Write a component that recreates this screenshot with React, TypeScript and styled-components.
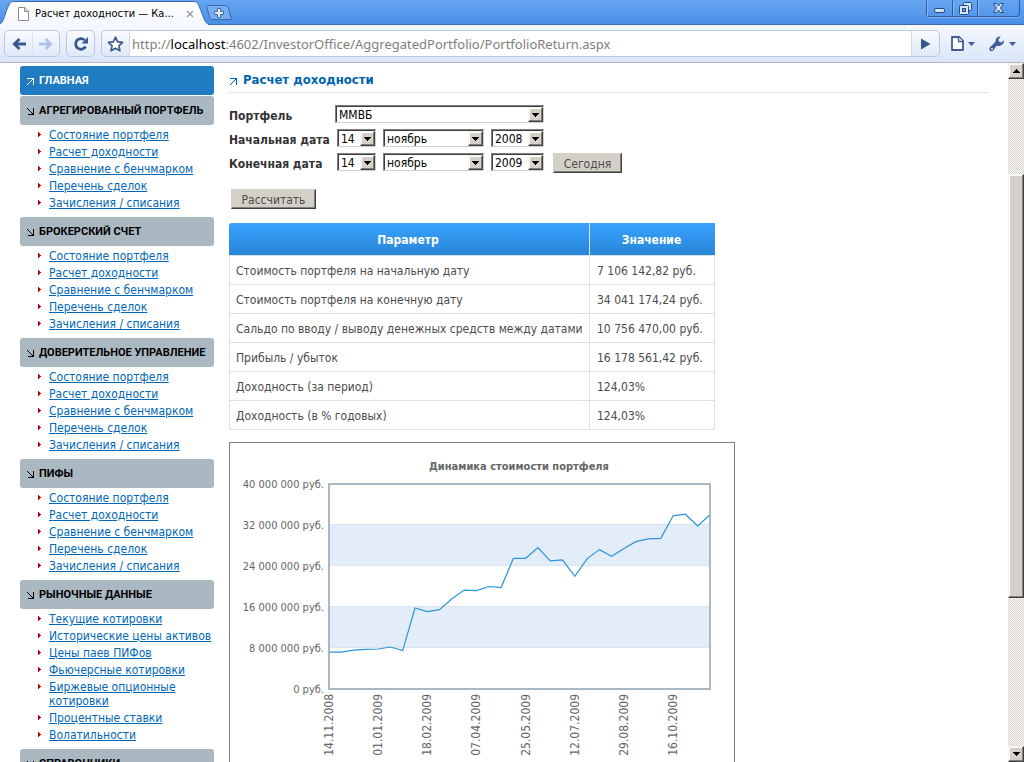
import React from "react";
import styled, { createGlobalStyle, css } from "styled-components";

const SANS = `"DejaVu Sans Condensed", "DejaVu Sans", sans-serif`;

const GlobalStyle = createGlobalStyle`
  *, *::before, *::after { box-sizing: border-box; }
  body { margin: 0; background: #fff; font: 12px/14px ${SANS}; color: #4c4c4c; }
  button, select, input { font: inherit; margin: 0; }
`;

const Window = styled.div`
  display: flex;
  flex-direction: column;
  height: 100vh;
  overflow: hidden;
`;

/* ---------- browser chrome ---------- */

const TabStrip = styled.header`
  display: flex;
  align-items: flex-start;
  flex: none;
  height: 25px;
  background: linear-gradient(#66a6f1, #4a8fe7);
  border-bottom: 1px solid #3d69a9;
`;

const Tab = styled.div`
  position: relative;
  display: flex;
  align-items: center;
  width: 209px;
  height: 25px;
  padding: 2px 15px 0 17px;
  gap: 5px;
  color: #000;
  font-size: 11px;
`;

const TabShape = styled.svg`
  position: absolute;
  inset: 0;
  z-index: 0;
`;

const TabIcon = styled.svg`
  position: relative;
  flex: none;
`;

const TabTitle = styled.span`
  position: relative;
  flex: 1;
  white-space: nowrap;
`;

const BareButton = styled.button`
  display: flex;
  align-items: center;
  justify-content: center;
  padding: 0;
  border: 0;
  background: none;
  position: relative;
`;

const NewTab = styled(BareButton)`
  margin: 5px auto 0 -4px;
`;

const WindowControls = styled.div`
  display: flex;
  height: 17px;
  margin-right: 4px;
  border: 1px solid #2c5ca0;
  border-top: 0;
  border-radius: 0 0 4px 4px;
  box-shadow: 0 1px 0 #7db3f3;
`;

const WindowButton = styled(BareButton)<{ $wide?: boolean }>`
  width: ${(p) => (p.$wide ? 42 : 25)}px;
  box-shadow: inset 1px 0 0 #83b6f4;
  & + & { border-left: 1px solid #2c5ca0; }
`;

const Toolbar = styled.nav`
  display: flex;
  align-items: center;
  flex: none;
  gap: 6px;
  height: 38px;
  padding: 0 8px 0 4px;
  background: linear-gradient(#f5f8fe, #d9e6f7);
  border-bottom: 1px solid #b1b6c6;
`;

const ToolGroup = styled.div`
  display: flex;
  height: 27px;
  border: 1px solid #bcc6e2;
  border-radius: 5px;
  background: linear-gradient(#fafcff, #dfe9f8);
  overflow: hidden;
`;

const ToolButton = styled(BareButton)`
  width: 27px;
  & + & { border-left: 1px solid #dbe3f2; }
`;

const Omnibox = styled.form`
  display: flex;
  flex: 1;
  height: 27px;
  border: 1px solid #bcc6e2;
  border-radius: 5px;
  background: linear-gradient(#fafcff, #dfe9f8);
  overflow: hidden;
`;

const Address = styled.label`
  position: relative;
  display: flex;
  flex: 1;
  align-items: center;
  background: #fff;
  border: solid #d0d8ea;
  border-width: 0 1px;
  font-family: "Noto Sans", sans-serif;
  font-size: 13px;
  line-height: 18px;
`;

const AddressInput = styled.input`
  width: 100%;
  height: 100%;
  padding: 0 2px;
  border: 0;
  outline: 0;
  background: none;
  color: transparent;
  caret-color: #000;
`;

const AddressText = styled.span`
  position: absolute;
  left: 2px;
  white-space: pre;
  color: #808080;
  pointer-events: none;
  b { font-weight: 400; color: #000; }
`;

const MenuButton = styled(BareButton)`
  gap: 4px;
  margin-left: 5px;
  & + & { margin-left: 8px; }
`;

/* ---------- page ---------- */

const Viewport = styled.div`
  display: flex;
  flex: 1;
  min-height: 0;
`;

const Page = styled.div`
  display: flex;
  flex: 1;
  align-items: flex-start;
  gap: 15px;
  padding: 3px 20px 0;
  overflow: hidden;
`;

const Sidebar = styled.aside`
  flex: none;
  width: 194px;
`;

const SectionTitle = styled.h2<{ $active?: boolean }>`
  display: flex;
  align-items: center;
  gap: 4px;
  height: 29px;
  margin: 0;
  padding: 0 6px;
  border-radius: 3px;
  background: ${(p) => (p.$active ? "#207cc1" : "#aab8c2")};
  color: ${(p) => (p.$active ? "#fff" : "#000")};
  font: bold 11px/14px Roboto, sans-serif;
  white-space: nowrap;
  ${(p) => p.$active && css`margin-bottom: 1px;`}
  a { color: inherit; text-decoration: none; }
`;

const LinkList = styled.ul`
  margin: 0;
  padding: 3px 0 4px 18px;
  list-style: none;
`;

const LinkItem = styled.li`
  display: flex;
  gap: 7px;
  padding-bottom: 3px;
  svg { flex: none; margin-top: 4px; }
  a { color: #0067b8; text-underline-offset: 1px; }
`;

const Main = styled.main`
  flex: 1;
  min-width: 0;
`;

const PageTitle = styled.h1`
  display: flex;
  align-items: center;
  gap: 5px;
  height: 27px;
  margin: 0 0 11px;
  padding-top: 2px;
  border-bottom: 1px solid #dbe1e7;
  color: #0062ac;
  font-size: 13px;
  line-height: 18px;
`;

const Form = styled.form`
  display: flex;
  flex-direction: column;
  align-items: flex-start;
`;

const Row = styled.div`
  display: flex;
  align-items: center;
  height: 24px;
  padding-bottom: 4px;
`;

const Label = styled.label`
  width: 106px;
  padding-top: 3px;
  color: #333;
  font-weight: bold;
  white-space: nowrap;
`;

const DateFields = styled.div`
  display: flex;
  align-items: center;
  gap: 7px;
  margin-left: 2px;
`;

const SelectBox = styled.span<{ $width: number }>`
  position: relative;
  display: block;
  width: ${(p) => p.$width}px;
  height: 18px;
`;

const Select = styled.select`
  display: block;
  width: 100%;
  height: 100%;
  padding: 1px 16px 0 3px;
  appearance: none;
  border: 1px solid;
  border-color: #808080 #d4d0c8 #d4d0c8 #808080;
  border-radius: 0;
  box-shadow: inset 1px 1px 0 #404040;
  background: #fff;
  color: #000;
  line-height: 14px;
`;

const bevel = css`
  border: 1px solid;
  border-color: #f4f2ee #404040 #404040 #f4f2ee;
  box-shadow: inset -1px -1px 0 #808080, inset 1px 1px 0 #fff;
  background: #d4d0c8;
`;

const SelectArrow = styled.span`
  position: absolute;
  top: 2px;
  right: 1px;
  bottom: 1px;
  width: 15px;
  display: flex;
  align-items: center;
  justify-content: center;
  pointer-events: none;
  ${bevel}
`;

const PushButton = styled.button<{ $width: number }>`
  width: ${(p) => p.$width}px;
  height: 20px;
  padding: 1px 0 0;
  border: 1px solid;
  border-color: #d4d0c8 #404040 #404040 #d4d0c8;
  box-shadow: inset -1px -1px 0 #808080;
  border-radius: 0;
  background: #d4d0c8;
  color: #4c4c4c;
  line-height: 16px;
`;

const Actions = styled.div`
  padding: 13px 2px 14px;
`;

const DataTable = styled.table`
  width: 486px;
  table-layout: fixed;
  border-collapse: separate;
  border-spacing: 0;
  thead { background: linear-gradient(#3aa1ff, #2787d6); }
`;

const HeadCell = styled.th`
  height: 32px;
  padding: 2px 2px 0 0;
  color: #fff;
  &:first-child { width: 361px; border-right: 1px solid #dbe8f4; border-top-left-radius: 3px; }
`;

const Cell = styled.td`
  height: 29px;
  padding: 2px 6px 0 7px;
  border: solid #dbe1e7;
  border-width: 0 1px 1px 0;
  white-space: nowrap;
  &:first-child { border-left-width: 1px; padding-left: 6px; }
  tr:first-child > & { border-top-width: 1px; height: 30px; }
`;

const ChartFrame = styled.figure`
  max-width: 506px;
  margin: 12px 0 0;
  border: 1px solid #7f7f7f;
  svg { display: block; }
`;

/* ---------- scroll bar ---------- */

const ScrollBar = styled.div`
  display: flex;
  flex-direction: column;
  flex: none;
  width: 16px;
  background: repeating-conic-gradient(#d4d0c8 0 25%, #fff 0 50%) 0 0 / 2px 2px;
`;

const ScrollButton = styled(BareButton)`
  height: 16px;
  ${bevel}
`;

const Track = styled.div`
  flex: 1;
  display: flex;
  flex-direction: column;
`;

const TrackGap = styled.div<{ $grow: number }>`
  flex: ${(p) => p.$grow} 0 0;
`;

const Thumb = styled.div`
  flex: 424 0 0;
  ${bevel}
`;

/* ---------- drawings ---------- */

const ArrowMark = ({ down }: { down?: boolean }) => (
  <svg width="9" height="11" viewBox="0 0 9 11" fill="none" stroke="currentColor" shapeRendering="crispEdges">
    {down ? (
      <path d="M7.500 3v7M2 9.500h6M1 3l6 6" />
    ) : (
      <path d="M1 3.500h7M7.500 3v7M1 10l6-6" />
    )}
  </svg>
);

const Bullet = () => (
  <svg width="4" height="5" viewBox="0 0 4 5" fill="#c8000a" shapeRendering="crispEdges">
    <path d="M0 0h1v1h1v1h1v1h-1v1h-1v1h-1z" />
  </svg>
);

const Triangle = ({ up }: { up?: boolean }) => (
  <svg width="7" height="4" viewBox="0 0 7 4" fill="#000" shapeRendering="crispEdges">
    <path d={up ? "M3 0h1v1h1v1h1v1h1v1H0v-1h1v-1h1v-1h1z" : "M0 0h7v1h-1v1h-1v1h-1v1h-1v-1h-1v-1h-1v-1h-1z"} />
  </svg>
);

const MenuCaret = () => (
  <svg width="7" height="4" viewBox="0 0 7 4" fill="#3d5c98"><path d="M0 0h7L3.500 4z" /></svg>
);

/* ---------- data ---------- */

const portfolioLinks = [
  "Состояние портфеля",
  "Расчет доходности",
  "Сравнение с бенчмарком",
  "Перечень сделок",
  "Зачисления / списания",
];

const sections: { title: string; links: string[] }[] = [
  { title: "АГРЕГИРОВАННЫЙ ПОРТФЕЛЬ", links: portfolioLinks },
  { title: "БРОКЕРСКИЙ СЧЕТ", links: portfolioLinks },
  { title: "ДОВЕРИТЕЛЬНОЕ УПРАВЛЕНИЕ", links: portfolioLinks },
  { title: "ПИФЫ", links: portfolioLinks },
  {
    title: "РЫНОЧНЫЕ ДАННЫЕ",
    links: [
      "Текущие котировки",
      "Исторические цены активов",
      "Цены паев ПИФов",
      "Фьючерсные котировки",
      "Биржевые опционные котировки",
      "Процентные ставки",
      "Волатильности",
    ],
  },
  { title: "СПРАВОЧНИКИ", links: [] },
];

const results: [string, string][] = [
  ["Стоимость портфеля на начальную дату", "7 106 142,82 руб."],
  ["Стоимость портфеля на конечную дату", "34 041 174,24 руб."],
  ["Сальдо по вводу / выводу денежных средств между датами", "10 756 470,00 руб."],
  ["Прибыль / убыток", "16 178 561,42 руб."],
  ["Доходность (за период)", "124,03%"],
  ["Доходность (в % годовых)", "124,03%"],
];

/* Portfolio value in millions of roubles, one point every twelve days */
const values = [
  7.2, 7.2, 7.6, 7.75, 7.8, 8.2, 7.5, 15.8, 15.1, 15.5, 17.6, 19.3, 19.2, 20, 19.8, 25.5,
  25.5, 27.6, 25, 25.2, 22, 25.4, 27.2, 25.9, 27.4, 28.8, 29.3, 29.4, 33.8, 34.1, 31.8, 34,
];
const axisValues = ["40 000 000", "32 000 000", "24 000 000", "16 000 000", "8 000 000", "0"];
const axisDates = [
  "14.11.2008", "01.01.2009", "18.02.2009", "07.04.2009",
  "25.05.2009", "12.07.2009", "29.08.2009", "16.10.2009",
];

const PLOT = { x: 99, y: 41, width: 381, height: 205 };

const ValueChart = () => {
  const stepX = PLOT.width / (values.length - 1);
  const points = values
    .map((v, i) => `${(PLOT.x + i * stepX).toFixed(1)},${(PLOT.y + PLOT.height * (1 - v / 40)).toFixed(1)}`)
    .join(" ");
  const bandY = (n: number) => PLOT.y + Math.round((PLOT.height * n) / 5);
  return (
    <svg width="504" height="340" viewBox="0 0 504 340" fontFamily={SANS} fontSize="11" fill="#666">
      <text x="289" y="27" textAnchor="middle" fontWeight="bold">Динамика стоимости портфеля</text>
      {[1, 3].map((n) => (
        <g key={n}>
          <rect x={PLOT.x} y={bandY(n)} width={PLOT.width} height={bandY(n + 1) - bandY(n)} fill="#e3edf9" />
          <path d={`M${PLOT.x} ${bandY(n) - 0.5}h${PLOT.width}M${PLOT.x} ${bandY(n + 1) - 0.5}h${PLOT.width}`} stroke="#dbe3ec" />
        </g>
      ))}
      <polyline points={points} fill="none" stroke="#2b93d9" strokeWidth="1.2" />
      <rect {...PLOT} fill="none" stroke="#a9b8c2" strokeWidth="2" />
      {axisValues.map((v, n) => (
        <text key={v} x="94" y={bandY(n) + 4} textAnchor="end">{v} руб.</text>
      ))}
      {axisDates.map((d, n) => (
        <text
          key={d}
          fontSize="12"
          textAnchor="end"
          transform={`translate(${Math.round(PLOT.x + n * 4 * stepX) + 4} 251) rotate(-90)`}
        >
          {d}
        </text>
      ))}
    </svg>
  );
};

const Dropdown = ({ id, label, width, value }: { id?: string; label?: string; width: number; value: string }) => (
  <SelectBox $width={width}>
    <Select id={id} aria-label={label} defaultValue={value}>
      <option>{value}</option>
    </Select>
    <SelectArrow><Triangle /></SelectArrow>
  </SelectBox>
);

const DateRow = ({ id, label, year, children }: { id: string; label: string; year: string; children?: React.ReactNode }) => (
  <Row>
    <Label htmlFor={id}>{label}</Label>
    <DateFields>
      <Dropdown id={id} width={39} value="14" />
      <Dropdown label={`${label}: месяц`} width={101} value="ноябрь" />
      <Dropdown label={`${label}: год`} width={53} value={year} />
      {children}
    </DateFields>
  </Row>
);

const TodayButton = styled(PushButton)`
  margin: 2px 0 0 2px;
`;

const URL_TEXT = "http://localhost:4602/InvestorOffice/AggregatedPortfolio/PortfolioReturn.aspx";

export default function App() {
  return (
    <>
      <GlobalStyle />
      <Window>
        <TabStrip>
          <Tab>
            <TabShape width="209" height="25" viewBox="0 0 209 25">
              <defs>
                <linearGradient id="tab" x1="0" y1="0" x2="0" y2="1">
                  <stop offset="0" stopColor="#fff" />
                  <stop offset="1" stopColor="#f5f8fe" />
                </linearGradient>
              </defs>
              <path d="M0 25V24C3 22 4 18 6 12C9 4 10 1.500 14 1.500H193C197 1.500 198 3 201 11C204 19 205 23 209 24.500V25Z" fill="url(#tab)" />
              <path d="M0 24C3 22 4 18 6 12C9 4 10 1.500 14 1.500H193C197 1.500 198 3 201 11C204 19 205 23 209 24.500" fill="none" stroke="#3d69a9" />
            </TabShape>
            <TabIcon width="13" height="14" viewBox="0 0 13 14" fill="#fff" stroke="#8b8b8b">
              <path d="M1.500 .5H8L11.500 4V13.500H1.500Z" />
              <path d="M7.500 .5V4.500H11.500" fill="#ddd" />
            </TabIcon>
            <TabTitle>Расчет доходности — Ка...</TabTitle>
            <BareButton type="button" aria-label="Закрыть вкладку">
              <svg width="8" height="8" viewBox="0 0 8 8" stroke="#a5a5a5" strokeWidth="1.600"><path d="M1 1l6 6M7 1l-6 6" /></svg>
            </BareButton>
          </Tab>
          <NewTab type="button" aria-label="Новая вкладка">
            <svg width="27" height="15" viewBox="0 0 27 15">
              <path d="M4 .5H20C22 .5 23 1.500 24 5L26.500 14.500H8C6 14.500 5 13.500 4 10L2 3C1.500 1 2 .5 4 .5Z" fill="#77aef2" stroke="#3d69a9" />
              <path d="M12.500 3.500h3v3h3v3h-3v3h-3v-3h-3v-3h3z" fill="#e4effc" stroke="#3d69a9" />
            </svg>
          </NewTab>
          <WindowControls>
            <WindowButton type="button" aria-label="Свернуть">
              <svg width="13" height="13" viewBox="0 0 13 13"><rect x="1.500" y="6.500" width="10" height="4" rx="1.500" fill="#d5e5fa" stroke="#254b83" /></svg>
            </WindowButton>
            <WindowButton type="button" aria-label="Восстановить">
              <svg width="13" height="13" viewBox="0 0 13 13" fill="#d5e5fa" stroke="#254b83">
                <rect x="4.500" y=".5" width="8" height="8" rx="1" />
                <rect x=".5" y="3.500" width="9" height="9" rx="1" />
                <rect x="3.500" y="6.500" width="3" height="3" fill="#5f9fee" />
              </svg>
            </WindowButton>
            <WindowButton $wide type="button" aria-label="Закрыть">
              <svg width="13" height="12" viewBox="0 0 13 12" fill="#d5e5fa" stroke="#254b83" strokeLinejoin="round">
                <path d="M1.500 1.500h3l2 2.500 2-2.500h3L8.500 6l3 4.500h-3l-2-2.500-2 2.500h-3L4.500 6z" />
              </svg>
            </WindowButton>
          </WindowControls>
        </TabStrip>

        <Toolbar>
          <ToolGroup>
            <ToolButton type="button" aria-label="Назад">
              <svg width="14" height="12" viewBox="0 0 14 12" fill="none" stroke="#39578f" strokeWidth="2.800"><path d="M14 6H2.500M7.500 1L2.300 6l5.200 5" /></svg>
            </ToolButton>
            <ToolButton type="button" aria-label="Вперед">
              <svg width="14" height="12" viewBox="0 0 14 12" fill="none" stroke="#aec3e3" strokeWidth="2.800"><path d="M0 6H11.500M6.500 1l5.200 5-5.200 5" /></svg>
            </ToolButton>
          </ToolGroup>
          <ToolGroup>
            <ToolButton type="button" aria-label="Обновить">
              <svg width="16" height="16" viewBox="0 0 16 16" fill="none" stroke="#39578f" strokeWidth="2.800">
                <path d="M12.600 10.500A5.300 5.300 0 1 1 11.500 4" />
                <path d="M15 1v6.500H8.500z" fill="#39578f" stroke="none" />
              </svg>
            </ToolButton>
          </ToolGroup>
          <Omnibox>
            <ToolButton type="button" aria-label="Добавить в закладки">
              <svg width="17" height="16" viewBox="0 0 17 16" fill="#fff" stroke="#39578f" strokeWidth="1.600" strokeLinejoin="round">
                <path d="M8.500 1.200l2.100 4.700 5 .5-3.700 3.400 1.100 5-4.500-2.600L4 14.800l1.100-5L1.400 6.400l5-.5z" />
              </svg>
            </ToolButton>
            <Address>
              <AddressInput aria-label="Адрес" defaultValue={URL_TEXT} />
              <AddressText aria-hidden="true">
                http://<b>localhost</b>:4602/InvestorOffice/AggregatedPortfolio/PortfolioReturn.aspx
              </AddressText>
            </Address>
            <ToolButton type="submit" aria-label="Перейти">
              <svg width="11" height="12" viewBox="0 0 11 12" fill="#39578f"><path d="M1 .5L10.500 6 1 11.500z" /></svg>
            </ToolButton>
          </Omnibox>
          <MenuButton type="button" aria-label="Меню страницы">
            <svg width="13" height="15" viewBox="0 0 13 15" fill="#fff" stroke="#3d5c98" strokeWidth="1.800" strokeLinejoin="round">
              <path d="M1 1h7l4 4v9H1z" />
              <path d="M7.500 1v4.500H12" strokeWidth="1.400" />
            </svg>
            <MenuCaret />
          </MenuButton>
          <MenuButton type="button" aria-label="Настройки">
            <svg width="16" height="16" viewBox="0 0 16 16" fill="#3d5c98">
              <path d="M11.800.6C9 0 6.200 2.300 6.500 5.800L.8 11.400c-1.600 2.100.9 4.900 3.300 3.300L7.500 9.800C11.500 10.700 15.300 8.200 15 4.300L12.300 6.600 10 5.800 9.400 3.500Z" />
              <circle cx="3" cy="13" r="1" fill="#dfe9f8" />
            </svg>
            <MenuCaret />
          </MenuButton>
        </Toolbar>

        <Viewport>
          <Page>
            <Sidebar>
              <SectionTitle $active><ArrowMark /><a href="#home">ГЛАВНАЯ</a></SectionTitle>
              {sections.map((s) => (
                <section key={s.title}>
                  <SectionTitle><ArrowMark down />{s.title}</SectionTitle>
                  <LinkList>
                    {s.links.map((l) => (
                      <LinkItem key={l}><Bullet /><a href="#open">{l}</a></LinkItem>
                    ))}
                  </LinkList>
                </section>
              ))}
            </Sidebar>
            <Main>
              <PageTitle><ArrowMark />Расчет доходности</PageTitle>
              <Form>
                <Row>
                  <Label htmlFor="portfolio">Портфель</Label>
                  <Dropdown id="portfolio" width={209} value="ММВБ" />
                </Row>
                <DateRow id="start" label="Начальная дата" year="2008" />
                <DateRow id="end" label="Конечная дата" year="2009">
                  <TodayButton type="button" $width={69}>Сегодня</TodayButton>
                </DateRow>
                <Actions><PushButton type="button" $width={85}>Рассчитать</PushButton></Actions>
              </Form>
              <DataTable>
                <thead>
                  <tr><HeadCell scope="col">Параметр</HeadCell><HeadCell scope="col">Значение</HeadCell></tr>
                </thead>
                <tbody>
                  {results.map(([name, value]) => (
                    <tr key={name}><Cell>{name}</Cell><Cell>{value}</Cell></tr>
                  ))}
                </tbody>
              </DataTable>
              <ChartFrame><ValueChart /></ChartFrame>
            </Main>
          </Page>
          <ScrollBar>
            <ScrollButton type="button" aria-label="Прокрутить вверх"><Triangle up /></ScrollButton>
            <Track>
              <TrackGap $grow={95} />
              <Thumb />
              <TrackGap $grow={148} />
            </Track>
            <ScrollButton type="button" aria-label="Прокрутить вниз"><Triangle /></ScrollButton>
          </ScrollBar>
        </Viewport>
      </Window>
    </>
  );
}
